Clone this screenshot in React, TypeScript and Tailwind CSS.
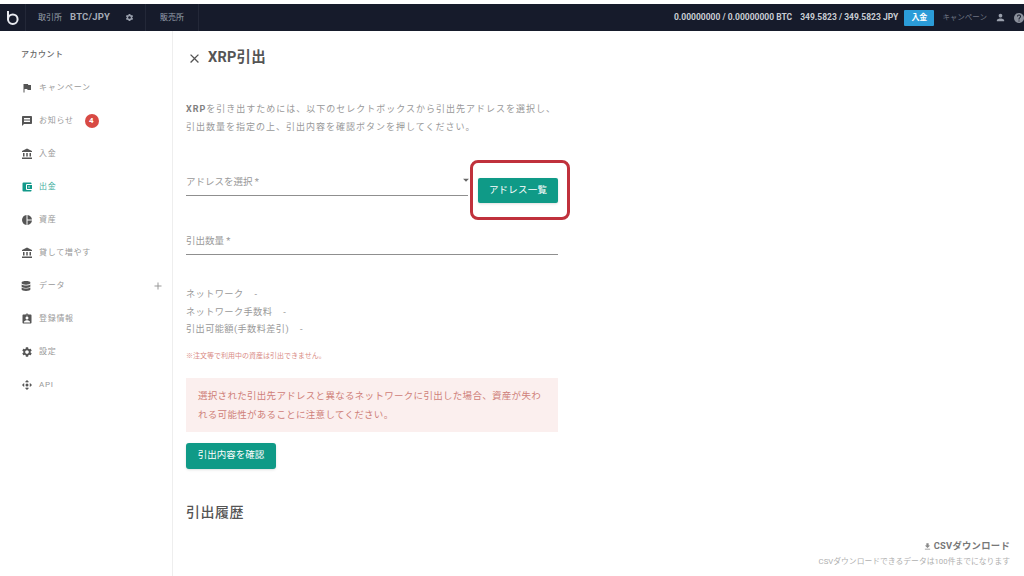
import { MdFlag, MdMessage, MdAccountBalance, MdAccountBalanceWallet, MdPieChart, MdAssignmentInd, MdSettings, MdControlCamera, MdPerson, MdHelp, MdClose, MdAdd, MdFileDownload, MdArrowDropDown } from "react-icons/md";
import { FaDatabase } from "react-icons/fa";
import type { ReactNode } from "react";

const font = { fontFamily: 'Roboto, "Noto Sans CJK JP", sans-serif' };

const navItems: { label: string; icon: ReactNode; active?: boolean; badge?: string; plus?: boolean }[] = [
  { label: "キャンペーン", icon: <MdFlag /> },
  { label: "お知らせ", icon: <MdMessage />, badge: "4" },
  { label: "入金", icon: <MdAccountBalance /> },
  { label: "出金", icon: <MdAccountBalanceWallet />, active: true },
  { label: "資産", icon: <MdPieChart /> },
  { label: "貸して増やす", icon: <MdAccountBalance /> },
  { label: "データ", icon: <FaDatabase className="text-[10px]" />, plus: true },
  { label: "登録情報", icon: <MdAssignmentInd /> },
  { label: "設定", icon: <MdSettings /> },
  { label: "API", icon: <MdControlCamera /> },
];

const Header = () => (
  <header className="h-[27px] shrink-0 bg-[#161b2b] flex items-center text-[#9aa0ad] text-[8px]">
    <div className="w-[26px] h-full flex items-center justify-center border-r border-[#232838]">
      <svg width="13" height="15" viewBox="0 0 13 15" fill="none" stroke="#e8eaf0" strokeWidth="2">
        <path d="M2 1v8.5" />
        <circle cx="6.8" cy="9.2" r="4.8" />
      </svg>
    </div>
    <div className="w-[120px] h-full flex items-center pl-[12px] border-r border-[#232838]">
      <span>取引所</span>
      <span className="ml-[8px] text-[9.5px] font-bold text-[#a6abb6] tracking-[0.2px]">BTC/JPY</span>
      <MdSettings className="ml-[15px] text-[9px]" />
    </div>
    <div className="w-[53px] h-full flex items-center justify-center border-r border-[#232838]">販売所</div>
    <div className="ml-auto flex items-center h-full font-bold text-[8.5px] text-[#c9ccd3]">
      <span>0.00000000 / 0.00000000 BTC</span>
      <span className="ml-[8px]">349.5823 / 349.5823 JPY</span>
      <span className="ml-[6px] w-[30px] h-[16px] bg-[#2b9cd8] rounded-[1px] text-white flex items-center justify-center text-[8px]">入金</span>
      <span className="ml-[8px] font-normal text-[7.5px] text-[#6f7482]">キャンペーン</span>
      <MdPerson className="ml-[8px] text-[11px] text-[#9aa0ad]" />
      <MdHelp className="ml-[7px] mr-[-1px] text-[12px] text-[#8a8f9b]" />
    </div>
  </header>
);

const Sidebar = () => (
  <aside className="w-[173px] shrink-0 border-r border-[#eeeeee] pt-[18px]">
    <div className="pl-[21px] text-[8px] font-medium text-[#666] h-[12px] leading-[12px] tracking-[0.5px]">アカウント</div>
    <ul className="mt-[10px]">
      {navItems.map((item) => (
        <li
          key={item.label}
          className={`h-[33px] flex items-center pl-[21px] pr-[8px] text-[8px] tracking-[0.7px] ${item.active ? "text-[#3fae9e]" : "text-[#999999]"}`}
        >
          <span className={`w-[18px] flex items-center text-[12px] ${item.active ? "text-[#12998a]" : "text-[#555]"}`}>{item.icon}</span>
          <span>{item.label}</span>
          {item.badge && (
            <span className="ml-[11px] w-[14px] h-[14px] rounded-full bg-[#d84a44] text-white text-[8px] font-bold flex items-center justify-center">{item.badge}</span>
          )}
          {item.plus && <MdAdd className="ml-auto text-[12px] text-[#999]" />}
        </li>
      ))}
    </ul>
  </aside>
);

const Field = ({ label, arrow }: { label: string; arrow?: boolean }) => (
  <div className="relative h-[29px] pt-[2px] border-b border-[#8f8f8f] flex items-center text-[9.5px] text-[#999999]">
    {label}
    {arrow && <MdArrowDropDown className="absolute right-[-5px] top-[6px] text-[14px] text-[#666]" />}
  </div>
);

const Main = () => (
  <main className="relative flex-1 pl-[13px] pt-[16px]">
    <div className="flex items-center h-[22px]">
      <MdClose className="text-[15px] text-[#555] ml-[1px]" />
      <h1 className="ml-[6px] text-[14.5px] font-bold text-[#555] tracking-[0.2px]">XRP引出</h1>
    </div>

    <p className="mt-[31px] w-[380px] text-[9px] leading-[18px] tracking-[1px] text-[#999999]">
      <span className="font-bold text-[#808080]">XRP</span>を引き出すためには、以下のセレクトボックスから引出先アドレスを選択し、<br />
      引出数量を指定の上、引出内容を確認ボタンを押してください。
    </p>

    <div className="mt-[31px] w-[372px] flex">
      <div className="w-[282px]">
        <Field label="アドレスを選択 *" arrow />
      </div>
      <button className="relative ml-[10px] mt-[11px] w-[80px] h-[25px] bg-[#0f9a87] rounded-[2px] text-white text-[9.5px] tracking-[0.2px] shadow-sm">
        アドレス一覧
        <span className="absolute left-[-8px] top-[-18px] w-[100px] h-[60px] border-[3px] border-[#c0313c] rounded-[8px]" />
      </button>
    </div>

    <div className="mt-[23px] w-[372px]">
      <Field label="引出数量 *" />
    </div>

    <dl className="mt-[30px] text-[9.2px] leading-[17.5px] text-[#999999] tracking-[0.4px]">
      <div className="flex"><dt>ネットワーク</dt><dd className="ml-[11px]">-</dd></div>
      <div className="flex"><dt>ネットワーク手数料</dt><dd className="ml-[11px]">-</dd></div>
      <div className="flex"><dt>引出可能額(手数料差引)</dt><dd className="ml-[11px]">-</dd></div>
    </dl>

    <p className="mt-[12px] text-[7px] leading-[12px] text-[#d98b85]">※注文等で利用中の資産は引出できません。</p>

    <div className="mt-[16px] w-[372px] h-[54px] bg-[#fbefee] px-[12px] py-[8px] text-[9.5px] leading-[19px] tracking-[0.3px] text-[#cf8079]">
      選択された引出先アドレスと異なるネットワークに引出した場合、資産が失われる可能性があることに注意してください。
    </div>

    <button className="mt-[11px] block w-[90px] h-[26px] bg-[#0f9a87] rounded-[3px] text-white text-[9.5px] shadow-sm">引出内容を確認</button>

    <h2 className="mt-[33px] text-[14px] font-medium text-[#555] tracking-[0.5px]">引出履歴</h2>

    <div className="absolute right-[14px] bottom-[8px] text-right">
      <div className="flex items-center justify-end text-[9.3px] font-bold text-[#777] tracking-[0.3px] leading-[14px]">
        <MdFileDownload className="text-[9px] mr-[2px] text-[#888]" />CSVダウンロード
      </div>
      <div className="mt-[3px] text-[7.8px] text-[#b0b0b0] leading-[12px]">CSVダウンロードできるデータは100件までになります</div>
    </div>
  </main>
);

export default function App() {
  return (
    <div className="w-[1024px] h-[576px] overflow-hidden bg-white flex flex-col pt-[4px]" style={font}>
      <Header />
      <div className="flex flex-1 min-h-0">
        <Sidebar />
        <Main />
      </div>
    </div>
  );
}
